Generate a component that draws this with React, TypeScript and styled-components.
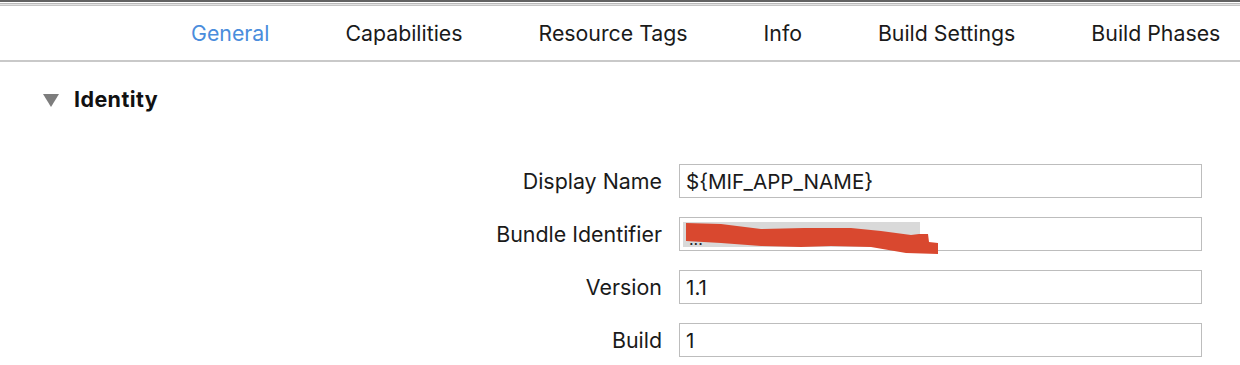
import React from "react";
import styled, { createGlobalStyle } from "styled-components";

const Global = createGlobalStyle`
  html, body { margin: 0; padding: 0; background: #ffffff; }
  body { font-family: Inter, "Liberation Sans", Arial, sans-serif; color: #111; }
`;

const Page = styled.div`
  width: 1240px;
  height: 365px;
  overflow: hidden;
  background: #fff;
  display: flex;
  flex-direction: column;
`;

const TopEdge = styled.div`
  height: 6px;
  border-top: 2px solid #626262;
  box-sizing: border-box;
  background: linear-gradient(#fff 0 1px, #b9b9b9 1px 2px, #e2e2e2 2px 3px, #c4c4c4 3px 4px);
`;

const TabBar = styled.div`
  height: 56px;
  box-sizing: border-box;
  border-bottom: 2px solid #c9c9c9;
  display: flex;
  align-items: center;
  padding-left: 191px;
  gap: 76px;
`;

const Tab = styled.div<{ $active?: boolean }>`
  font-size: 21.3px;
  color: ${(p) => (p.$active ? "#4a8ddc" : "#1a1a1a")};
  white-space: nowrap;
  line-height: 1;
  margin-top: 2px;
`;

const SectionHeader = styled.div`
  display: flex;
  align-items: center;
  gap: 15px;
  padding: 26px 0 0 43px;
  height: 24px;
`;

const Disclosure = styled.div`
  width: 0;
  height: 0;
  border-left: 8px solid transparent;
  border-right: 8px solid transparent;
  border-top: 13px solid #7d7d7d;
`;

const SectionTitle = styled.div`
  font-size: 21.5px;
  letter-spacing: 0.4px;
  font-weight: 700;
  color: #111;
  line-height: 1;
`;

const Form = styled.div`
  display: grid;
  grid-template-columns: 1fr 523px;
  column-gap: 17px;
  row-gap: 19px;
  padding: 52px 38px 0 0;
  align-items: center;
`;

const Label = styled.div`
  text-align: right;
  font-size: 21.4px;
  color: #1a1a1a;
  white-space: nowrap;
`;

const Field = styled.div`
  position: relative;
  height: 34px;
  box-sizing: border-box;
  border: 1px solid #bdbdbd;
  background: #fff;
  display: flex;
  align-items: center;
  padding-left: 6px;
  font-size: 20.6px;
  color: #1a1a1a;
  white-space: nowrap;
`;

const Selection = styled.div`
  position: relative;
  height: 25px;
  width: 237px;
  margin-left: -3px;
  background: #d9d9d9;
  display: flex;
  align-items: flex-end;
  padding-left: 6px;
  box-sizing: border-box;
  font-size: 16px;
  color: #222;
  line-height: 1;
`;

const Scribble = styled.svg`
  position: absolute;
  left: 5px;
  top: 4px;
  pointer-events: none;
`;

export default function App() {
  const tabs = ["General", "Capabilities", "Resource Tags", "Info", "Build Settings", "Build Phases"];
  return (
    <>
      <Global />
      <Page>
        <TopEdge />
        <TabBar>
          {tabs.map((t, i) => (
            <Tab key={t} $active={i === 0}>
              {t}
            </Tab>
          ))}
        </TabBar>
        <SectionHeader>
          <Disclosure />
          <SectionTitle>Identity</SectionTitle>
        </SectionHeader>
        <Form>
          <Label>Display Name</Label>
          <Field>{"${MIF_APP_NAME}"}</Field>
          <Label>Bundle Identifier</Label>
          <Field>
            <Selection>...</Selection>
            <Scribble width="260" height="34" viewBox="0 0 260 34">
              <path
                d="M1 1 L36 2 L76 7 L119 6 L166 6 L196 9 L226 13 L234 12 L243 12 L244 20 L253 21 L253 32 L221 31 L186 25 L146 24 L116 25 L76 24 L36 21 L1 19 Z"
                fill="#d9482f"
              />
            </Scribble>
          </Field>
          <Label>Version</Label>
          <Field>1.1</Field>
          <Label>Build</Label>
          <Field>1</Field>
        </Form>
      </Page>
    </>
  );
}
